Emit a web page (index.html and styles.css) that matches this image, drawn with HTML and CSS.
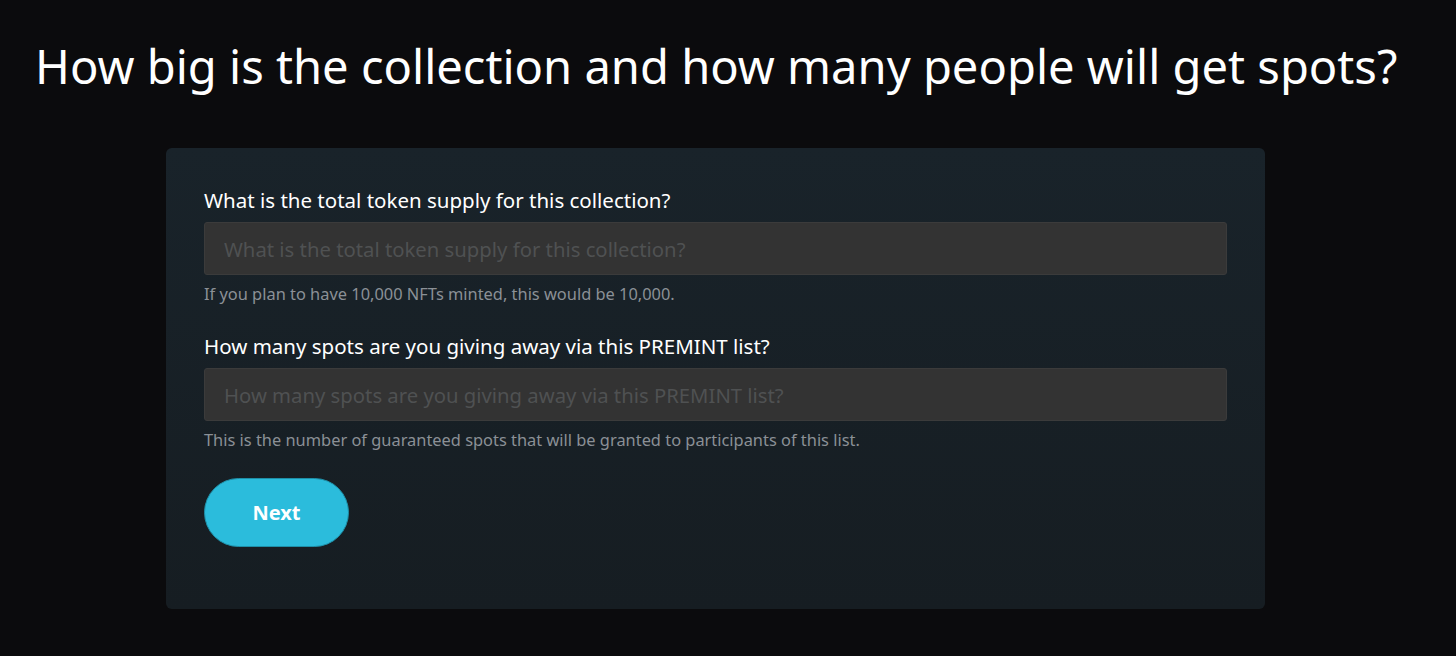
FILE: index.html
```html
<!DOCTYPE html>
<html lang="en">
<head>
<meta charset="utf-8">
<title>PREMINT</title>
<link rel="stylesheet" href="styles.css">
</head>
<body>
<main class="page">
  <h1 class="title">How big is the collection and how many people will get spots?</h1>
  <section class="card">
    <div class="field">
      <label class="label" for="supply">What is the total token supply for this collection?</label>
      <input class="input" id="supply" type="text" placeholder="What is the total token supply for this collection?">
      <p class="help">If you plan to have 10,000 NFTs minted, this would be 10,000.</p>
    </div>
    <div class="field">
      <label class="label" for="spots">How many spots are you giving away via this PREMINT list?</label>
      <input class="input" id="spots" type="text" placeholder="How many spots are you giving away via this PREMINT list?">
      <p class="help">This is the number of guaranteed spots that will be granted to participants of this list.</p>
    </div>
    <button class="btn" type="button">Next</button>
  </section>
</main>
</body>
</html>
```
FILE: styles.css
```css
html, body {
  margin: 0;
  padding: 0;
  background: #0b0b0d;
  height: 100%;
}
body {
  font-family: "Noto Sans", "Open Sans", sans-serif;
  color: #ffffff;
}
.title {
  margin: 0;
  padding: 34px 0 0 35px;
  font-size: 47.1px;
  font-weight: 400;
  line-height: 64px;
}
.card {
  margin: 50px 0 0 166px;
  width: 1099px;
  box-sizing: border-box;
  padding: 39px 38px 62px 38px;
  background: linear-gradient(180deg, #19232a 0%, #161d22 100%);
  border-radius: 6px;
}
.field {
  display: flex;
  flex-direction: column;
  margin-bottom: 29px;
}
.field:last-of-type {
  margin-bottom: 28px;
}
.label {
  font-size: 20.5px;
  line-height: 26px;
  color: #ffffff;
  margin-bottom: 9px;
}
.input {
  height: 53px;
  box-sizing: border-box;
  background: #333333;
  border: 1px solid #3b3b3b;
  border-radius: 3px;
  padding: 0 19px;
  font-family: inherit;
  font-size: 20.3px;
  color: #fff;
  outline: none;
}
.input::placeholder {
  color: #4f5152;
}
.help {
  margin: 9px 0 0 0;
  font-size: 16.4px;
  line-height: 20px;
  color: #8b9096;
}
.btn {
  display: block;
  width: 145px;
  height: 69px;
  border: 1px solid #1e8fa8;
  border-radius: 35px;
  background: #2bbcdc;
  color: #ffffff;
  font-family: inherit;
  font-size: 20px;
  font-weight: 700;
  padding: 0;
}
```
